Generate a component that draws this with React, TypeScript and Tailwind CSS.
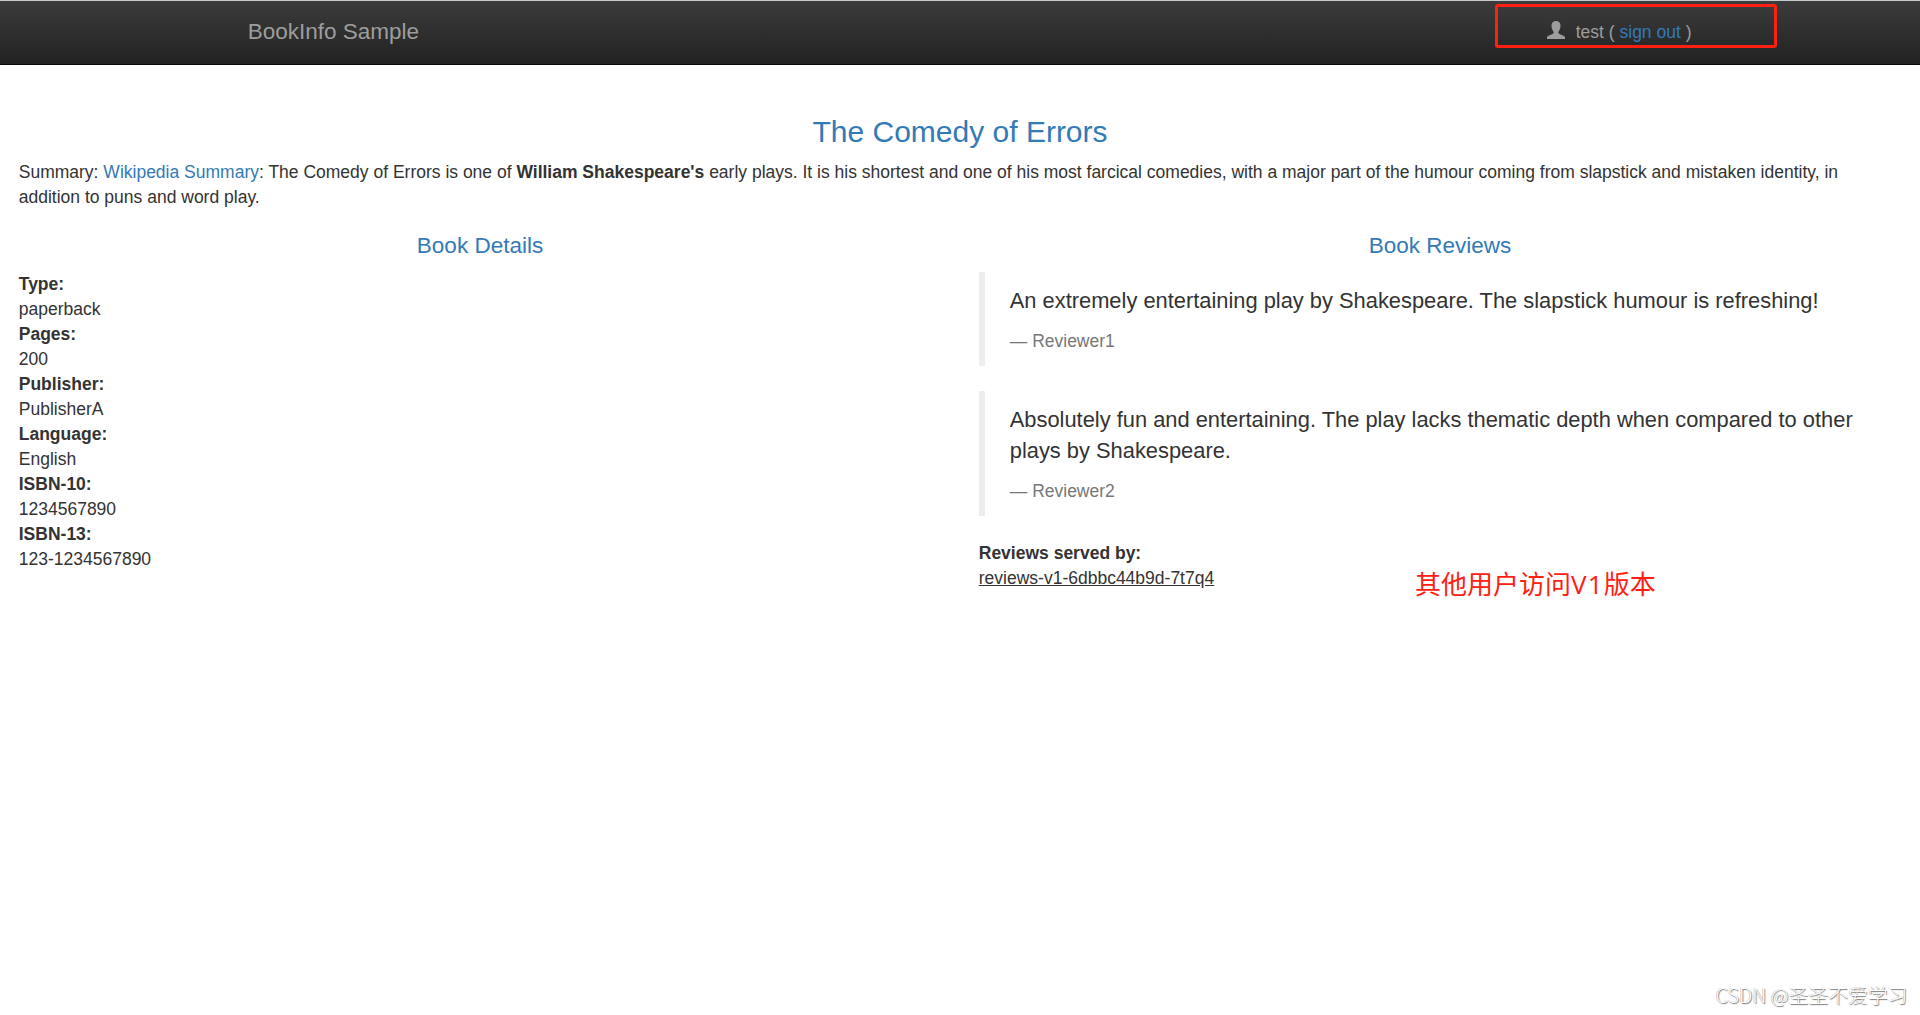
import React from "react";

const DETAILS = [
  { label: "Type:", value: "paperback" },
  { label: "Pages:", value: "200" },
  { label: "Publisher:", value: "PublisherA" },
  { label: "Language:", value: "English" },
  { label: "ISBN-10:", value: "1234567890" },
  { label: "ISBN-13:", value: "123-1234567890" },
];

const REVIEWS = [
  {
    text: "An extremely entertaining play by Shakespeare. The slapstick humour is refreshing!",
    reviewer: "Reviewer1",
  },
  {
    text: "Absolutely fun and entertaining. The play lacks thematic depth when compared to other plays by Shakespeare.",
    reviewer: "Reviewer2",
  },
];

function UserIcon() {
  return (
    <svg viewBox="0 0 18 18" className="mb-[4px] h-[18px] w-[18px]" fill="currentColor">
      <path d="M9 0C6.200 0 4.500 1.700 4.500 4.300c0 2.200.5 4.100 1.400 5.400.5.700.8 1.200.8 1.700 0 .7-.4 1.100-1.200 1.500L1.500 14.800C.4 15.300 0 15.900 0 16.800V18h18v-1.200c0-.9-.4-1.500-1.500-2L12.500 12.900c-.8-.4-1.200-.8-1.200-1.500 0-.5.3-1 .8-1.700.9-1.300 1.400-3.200 1.400-5.400C13.500 1.700 11.800 0 9 0z" />
    </svg>
  );
}

function Navbar() {
  return (
    <nav className="relative h-[65px] border-t border-t-[#c4cac9] border-b border-b-[#080808] bg-linear-to-b from-[#3c3c3c] to-[#222222] text-[#9d9d9d]">
      <div className="mx-auto flex h-[62px] w-[1463px] items-center justify-between pl-[19.25px]">
        <span className="pb-[2px] text-[22.5px] leading-[25px]">BookInfo Sample</span>
        <div className="flex items-center leading-[25px]">
          <UserIcon />
          <span className="ml-[11px] whitespace-pre">
            test ( <a className="text-[#337ab7]">sign out</a> )
          </span>
        </div>
      </div>
      {/* Highlight around the signed-in user */}
      <div className="absolute left-[1495px] top-[3px] h-[44px] w-[282px] rounded-[3px] border-3 border-[#ff2012]" />
    </nav>
  );
}

export default function App() {
  return (
    <div className="relative h-[1015px] overflow-hidden bg-white font-['Liberation_Sans',Arial,sans-serif] text-[17.5px] leading-[25px] text-[#333333]">
      <Navbar />

      <main className="px-[18.75px] pt-[50.25px]">
        <h3 className="mb-[11.5px] text-center text-[30px] leading-[33px] text-[#337ab7]">
          The Comedy of Errors
        </h3>
        <p>
          Summary: <a className="text-[#337ab7]">Wikipedia Summary</a>: The Comedy of Errors is one of{" "}
          <b>William Shakespeare's</b> early plays. It is his shortest and one of his most farcical
          comedies, with a major part of the humour coming from slapstick and mistaken identity, in
          addition to puns and word play.
        </p>

        <div className="mt-6 grid grid-cols-2 gap-[37.5px]">
          <section>
            <h4 className="mb-[13.5px] text-center text-[22.5px] leading-[24.75px] text-[#337ab7]">
              Book Details
            </h4>
            <dl>
              {DETAILS.map((item) => (
                <React.Fragment key={item.label}>
                  <dt className="font-bold">{item.label}</dt>
                  <dd>{item.value}</dd>
                </React.Fragment>
              ))}
            </dl>
          </section>

          <section>
            <h4 className="mb-[13.5px] text-center text-[22.5px] leading-[24.75px] text-[#337ab7]">
              Book Reviews
            </h4>
            {REVIEWS.map((review) => (
              <blockquote
                key={review.reviewer}
                className="mb-[25px] border-l-6 border-[#eeeeee] px-[25px] pt-[13px] pb-[12px]"
              >
                <p className="mb-[13px] text-[21.875px] leading-[31px]">{review.text}</p>
                <small className="block text-[17.5px] text-[#777777]">— {review.reviewer}</small>
              </blockquote>
            ))}
            <dl>
              <dt className="font-bold">Reviews served by:</dt>
              <dd className="underline">reviews-v1-6dbbc44b9d-7t7q4</dd>
            </dl>
          </section>
        </div>
      </main>

      {/* Annotation and watermark lie over the page */}
      <div className="absolute left-[1415px] top-[566px] whitespace-nowrap font-['Open_Sans','Noto_Sans_CJK_SC',sans-serif] text-[26px] leading-[36px] text-[#ff2012]">
        其他用户访问<span className="tracking-[1.2px]">V1</span>版本
      </div>
      <div className="absolute left-[1715.5px] top-[981px] whitespace-nowrap font-['Noto_Sans_CJK_SC',sans-serif] text-[19.8px] font-light leading-[28px] text-white [text-shadow:1px_1px_1px_#777777,-0.5px_-0.5px_0_#b4b4b4]">
        CSDN @圣圣不爱学习
      </div>
    </div>
  );
}
